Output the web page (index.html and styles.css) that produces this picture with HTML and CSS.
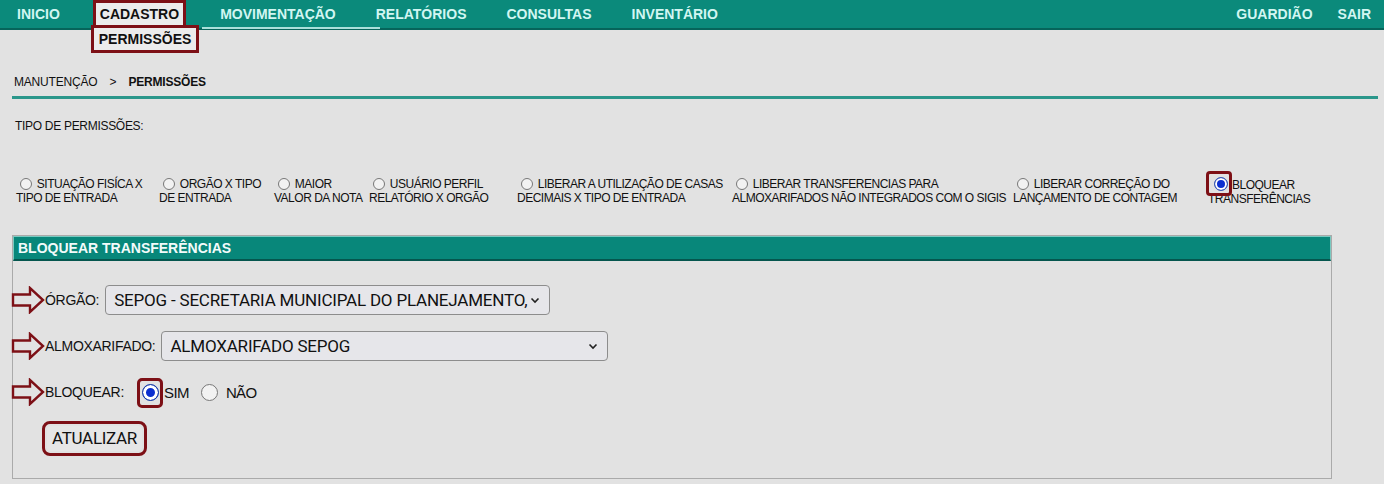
FILE: index.html
```html
<!DOCTYPE html>
<html lang="pt-BR">
<head>
    <meta charset="UTF-8">
    <title>Permissões</title>
    <link rel="stylesheet" href="styles.css">
</head>
<body>
    <nav class="topbar">
        <ul class="menu">
            <li class="menu-item">INICIO</li>
            <li class="menu-item active">
                <span class="mark">CADASTRO</span>
                <div class="submenu"><span class="mark">PERMISSÕES</span></div>
            </li>
            <li class="menu-item hover">MOVIMENTAÇÃO</li>
            <li class="menu-item">RELATÓRIOS</li>
            <li class="menu-item">CONSULTAS</li>
            <li class="menu-item">INVENTÁRIO</li>
        </ul>
        <ul class="menu menu-right">
            <li class="menu-item">GUARDIÃO</li>
            <li class="menu-item">SAIR</li>
        </ul>
    </nav>

    <div class="content">
        <div class="breadcrumb">MANUTENÇÃO <span class="sep">&gt;</span> <b>PERMISSÕES</b></div>

        <p class="section-label">TIPO DE PERMISSÕES:</p>

        <div class="options">
            <label class="option"><span class="radio"></span> SITUAÇÃO FISÍCA X TIPO DE ENTRADA</label>
            <label class="option"><span class="radio"></span> ORGÃO X TIPO DE ENTRADA</label>
            <label class="option"><span class="radio"></span> MAIOR VALOR DA NOTA</label>
            <label class="option"><span class="radio"></span> USUÁRIO PERFIL RELATÓRIO X ORGÃO</label>
            <label class="option"><span class="radio"></span> LIBERAR A UTILIZAÇÃO DE CASAS DECIMAIS X TIPO DE ENTRADA</label>
            <label class="option"><span class="radio"></span> LIBERAR TRANSFERENCIAS PARA ALMOXARIFADOS NÃO INTEGRADOS COM O SIGIS</label>
            <label class="option"><span class="radio"></span> LIBERAR CORREÇÃO DO LANÇAMENTO DE CONTAGEM</label>
            <label class="option"><span class="radio checked highlight"></span>BLOQUEAR TRANSFERÊNCIAS</label>
        </div>

        <div class="panel">
            <div class="panel-title">BLOQUEAR TRANSFERÊNCIAS</div>
            <div class="panel-body">
                <div class="form-row">
                    <svg class="arrow" width="34" height="28" viewBox="0 0 34 28"><path d="M2 8.5 H19 V2 L32 14 L19 26 V19.5 H2 Z" fill="none" stroke="#7d1016" stroke-width="2.4" stroke-linejoin="miter"/></svg>
                    <span class="field-label">ÓRGÃO:</span>
                    <div class="select select-orgao">
                        <span>SEPOG - SECRETARIA MUNICIPAL DO PLANEJAMENTO,</span>
                        <svg width="10" height="7" viewBox="0 0 10 7"><path d="M1.5 1.5 L5 5 L8.5 1.5" fill="none" stroke="#222" stroke-width="1.6"/></svg>
                    </div>
                </div>
                <div class="form-row">
                    <svg class="arrow" width="34" height="28" viewBox="0 0 34 28"><path d="M2 8.5 H19 V2 L32 14 L19 26 V19.5 H2 Z" fill="none" stroke="#7d1016" stroke-width="2.4" stroke-linejoin="miter"/></svg>
                    <span class="field-label">ALMOXARIFADO:</span>
                    <div class="select select-almox">
                        <span>ALMOXARIFADO SEPOG</span>
                        <svg width="10" height="7" viewBox="0 0 10 7"><path d="M1.5 1.5 L5 5 L8.5 1.5" fill="none" stroke="#222" stroke-width="1.6"/></svg>
                    </div>
                </div>
                <div class="form-row">
                    <svg class="arrow" width="34" height="28" viewBox="0 0 34 28"><path d="M2 8.5 H19 V2 L32 14 L19 26 V19.5 H2 Z" fill="none" stroke="#7d1016" stroke-width="2.4" stroke-linejoin="miter"/></svg>
                    <span class="field-label">BLOQUEAR:</span>
                    <span class="radio checked highlight big"></span>
                    <span class="choice">SIM</span>
                    <span class="radio big-radio"></span>
                    <span class="choice">NÃO</span>
                </div>
                <div class="form-row">
                    <span class="btn-wrap"><button class="btn">ATUALIZAR</button></span>
                </div>
            </div>
        </div>
    </div>
</body>
</html>
```

FILE: styles.css
```css
* {
    margin: 0;
    padding: 0;
    box-sizing: border-box;
}

body {
    background-color: #e2e2e2;
    font-family: "Liberation Sans", Arial, sans-serif;
    color: #111;
}

/* top menu */
.topbar {
    display: flex;
    justify-content: space-between;
    height: 30px;
    background-color: #0b8a7b;
    border-bottom: 2px solid #06645a;
}

.menu {
    display: flex;
    list-style: none;
    padding-left: 17px;
    gap: 40px;
}

.menu-right {
    padding-left: 0;
    padding-right: 13px;
    gap: 25px;
}

.menu-item {
    position: relative;
    font-size: 14px;
    font-weight: bold;
    line-height: 28px;
    color: #d2f6f2;
    white-space: nowrap;
}

.menu-item.hover::after {
    content: "";
    position: absolute;
    left: -18px;
    right: -44px;
    bottom: -1px;
    height: 2px;
    background: #a9e0da;
}

.mark {
    display: inline-block;
    margin: -2px -6px 0 -7px;
    padding: 0 4px;
    line-height: 22px;
    background: #ececec;
    color: #111;
    border: 3px solid #7d1016;
}

.submenu {
    position: absolute;
    top: 25px;
    left: -9px;
    z-index: 2;
}

.submenu .mark {
    margin: 0;
    padding: 0 5px;
    line-height: 22px;
}

/* content */
.content {
    padding: 0 6px 0 12px;
}

.breadcrumb {
    margin-top: 45px;
    padding: 0 2px 7px;
    font-size: 12px;
    letter-spacing: -0.2px;
    border-bottom: 3px solid #2b978b;
}

.breadcrumb .sep {
    margin: 0 9px;
}

.section-label {
    margin-top: 20px;
    padding-left: 3px;
    font-size: 12px;
    letter-spacing: -0.3px;
}

.options {
    display: grid;
    grid-template-columns: 143px 115px 95px 148px 215px 281px 195px 180px;
    margin-top: 44px;
    padding-left: 4px;
    font-size: 12px;
    line-height: 14px;
    letter-spacing: -0.5px;
}

.option {
    padding-right: 6px;
}

.radio {
    display: inline-block;
    width: 12px;
    height: 12px;
    margin: 0 2px 0 4px;
    border: 1px solid #777;
    border-radius: 50%;
    background: #f2f2f2;
    vertical-align: -2px;
}

.radio.checked {
    width: 14px;
    height: 14px;
    margin: 0 4px 0 6px;
    background: #0b2fd0;
    border: 1px solid #3a5ab0;
    box-shadow: inset 0 0 0 2px #fff;
}

/* red annotation box drawn around the chosen radio */
.highlight {
    position: relative;
}

.highlight::before {
    content: "";
    position: absolute;
    top: -7px;
    right: -5px;
    bottom: -6px;
    left: -9px;
    border: 3px solid #7d1016;
    border-radius: 4px;
}

/* panel */
.panel {
    width: 1320px;
    margin-top: 29px;
    border: 1px solid #aaa;
}

.panel-title {
    height: 25px;
    padding-left: 4px;
    background: #08877a;
    border: 1px solid #7ac9c0;
    border-bottom: 2px solid #05564e;
    font-size: 14px;
    font-weight: bold;
    line-height: 22px;
    color: #f2fbfa;
}

.panel-body {
    padding: 24px 0 20px 32px;
    height: 217px;
}

.form-row {
    display: flex;
    align-items: center;
    height: 30px;
    margin-bottom: 16px;
    font-size: 14px;
    letter-spacing: -0.3px;
}

.arrow {
    margin-left: -34px;
}

.field-label {
    margin-right: 6px;
}

.select {
    display: flex;
    align-items: center;
    justify-content: space-between;
    height: 30px;
    padding: 0 9px 0 8px;
    background: #e6e6ea;
    border: 1px solid #8d8d8d;
    border-radius: 4px;
    font-family: Roboto, "Liberation Sans", sans-serif;
    font-size: 17px;
    letter-spacing: -0.2px;
    color: #111;
}

.select-orgao {
    width: 445px;
}

.select-almox {
    width: 447px;
}

.radio.big {
    width: 17px;
    height: 17px;
    margin: 0 5px 0 12px;
    box-shadow: inset 0 0 0 3px #fff;
    border-color: #1a3ea0;
}

.radio.big::before {
    top: -7px;
    right: -5px;
    bottom: -8px;
    left: -6px;
    border-radius: 5px;
}

.big-radio {
    width: 17px;
    height: 17px;
    margin: 0 8px 0 12px;
}

.choice {
    font-size: 15px;
    letter-spacing: -0.6px;
}

.btn-wrap {
    display: inline-block;
    padding: 2px;
    border: 3px solid #7d1016;
    border-radius: 8px;
    margin-left: -3px;
}

.btn {
    height: 25px;
    padding: 0 5px;
    background: #e6e6e6;
    border: none;
    border-radius: 4px;
    font-family: Roboto, "Liberation Sans", sans-serif;
    font-size: 17px;
    letter-spacing: -0.3px;
    color: #111;
}
```
